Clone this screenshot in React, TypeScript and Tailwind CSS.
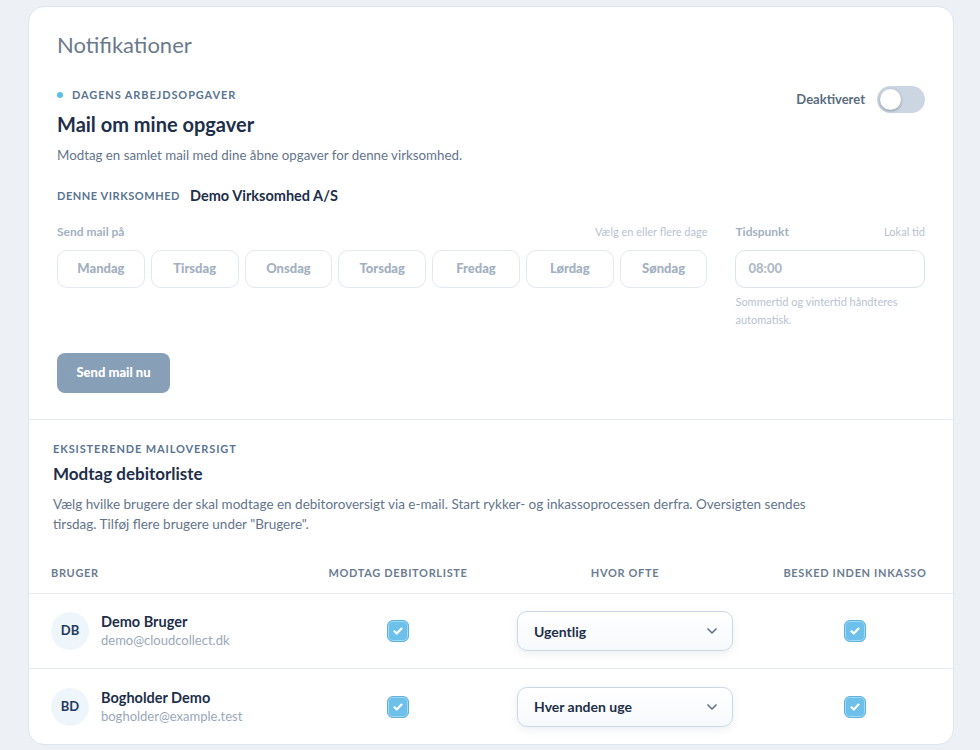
import { ChevronDown } from "lucide-react";

const days = ["Mandag", "Tirsdag", "Onsdag", "Torsdag", "Fredag", "Lørdag", "Søndag"];

const users = [
  { initials: "DB", name: "Demo Bruger", email: "demo@cloudcollect.dk", freq: "Ugentlig" },
  { initials: "BD", name: "Bogholder Demo", email: "bogholder@example.test", freq: "Hver anden uge" },
];

function Check() {
  return (
    <span className="flex h-[22px] w-[22px] items-center justify-center rounded-[6px] border border-[#5db2df] bg-[#6cc0e9] shadow-[inset_0_0_0_1px_#a3d9f3]">
      <svg width="12" height="12" viewBox="0 0 12 12" fill="none">
        <path d="M2.5 6.3l2.3 2.2 4.7-4.9" stroke="#fff" strokeWidth="2.2" strokeLinecap="round" strokeLinejoin="round" />
      </svg>
    </span>
  );
}

export default function App() {
  return (
    <div className="min-h-[750px] bg-[#edf1f5] pl-[28px] pr-[26px] pt-[6px] font-['Lato',sans-serif] text-[#1e2f4a]">
      <div className="overflow-hidden rounded-[16px] border border-[#dde5ee] bg-white">
        <section className="px-7 pb-[26px] pt-[23px]">
          <h1 className="text-[22px] leading-[30px] font-normal text-[#6b7a8b]">Notifikationer</h1>

          <div className="mt-[27px] flex items-start justify-between">
            <div>
              <div className="flex items-center gap-[9px]">
                <span className="h-[6px] w-[6px] rounded-full bg-[#5bbfe9]" />
                <span className="text-[11px] leading-4 font-bold uppercase tracking-[0.08em] text-[#5a7491]">
                  Dagens arbejdsopgaver
                </span>
              </div>
              <h2 className="mt-[7px] text-[20px] leading-7 font-bold text-[#1e2f4a]">Mail om mine opgaver</h2>
              <p className="mt-[7px] text-[13.3px] leading-5 text-[#64748b]">
                Modtag en samlet mail med dine åbne opgaver for denne virksomhed.
              </p>
            </div>
            <div className="-mt-[1px] flex items-center gap-3">
              <span className="text-[13px] font-bold text-[#5a6b80]">Deaktiveret</span>
              <span className="flex h-[27px] w-[48px] items-center rounded-full bg-[#cbd6e2] px-[3px]">
                <span className="h-[21px] w-[21px] rounded-full bg-white shadow-[0_1px_3px_rgba(15,23,42,0.35)]" />
              </span>
            </div>
          </div>

          <div className="mt-[21px] flex items-center gap-[10px] leading-5">
            <span className="text-[11px] font-bold uppercase tracking-[0.05em] text-[#5a7491]">Denne virksomhed</span>
            <span className="text-[14.5px] font-bold text-[#1e2f4a]">Demo Virksomhed A/S</span>
          </div>

          <div className="mt-[17px] flex gap-7">
            <div className="w-[652px]">
              <div className="flex items-center justify-between leading-[18px]">
                <span className="text-[12px] font-bold text-[#a3b0c0]">Send mail på</span>
                <span className="text-[11px] text-[#b8c2cf]">Vælg en eller flere dage</span>
              </div>
              <div className="mt-[9px] grid grid-cols-7 gap-[6px]">
                {days.map((d) => (
                  <button
                    key={d}
                    className="flex h-[38px] items-center justify-center rounded-[10px] border border-[#e2e8f0] bg-white text-[13px] font-black text-[#a3b0c0]"
                  >
                    {d}
                  </button>
                ))}
              </div>
            </div>
            <div className="w-[190px]">
              <div className="flex items-center justify-between leading-[18px]">
                <span className="text-[12px] font-bold text-[#a3b0c0]">Tidspunkt</span>
                <span className="text-[11px] text-[#b8c2cf]">Lokal tid</span>
              </div>
              <div className="mt-[9px] flex h-[38px] items-center rounded-[10px] border border-[#dbe3ec] px-3 text-[13px] font-black text-[#b0bac6]">
                08:00
              </div>
              <p className="mt-[5px] text-[11px] leading-[18px] text-[#b8c2cf]">
                Sommertid og vintertid håndteres automatisk.
              </p>
            </div>
          </div>

          <button className="mt-[24px] h-10 w-[113px] rounded-[8px] bg-[#87a0b8] text-[13px] font-black text-white">
            Send mail nu
          </button>
        </section>

        <section className="border-t border-[#e5ebf1]">
          <div className="px-6 pt-[21px]">
            <div className="text-[11px] leading-4 font-bold uppercase tracking-[0.08em] text-[#5a7491]">
              Eksisterende mailoversigt
            </div>
            <h2 className="mt-[5px] text-[17px] leading-6 font-bold text-[#1e2f4a]">Modtag debitorliste</h2>
            <p className="mt-[8px] max-w-[775px] text-[13.5px] leading-5 text-[#64748b]">
              Vælg hvilke brugere der skal modtage en debitoroversigt via e-mail. Start rykker- og inkassoprocessen derfra. Oversigten sendes tirsdag. Tilføj flere brugere under "Brugere".
            </p>
          </div>

          <div className="mt-5">
            <div className="grid h-10 grid-cols-[272px_150px_304px_156px] items-center border-b border-[#e5ebf1] px-[22px] text-[11px] font-bold uppercase tracking-[0.06em] text-[#6b7c90]">
              <span>Bruger</span>
              <span className="text-center">Modtag debitorliste</span>
              <span className="text-center">Hvor ofte</span>
              <span className="text-center">Besked inden inkasso</span>
            </div>
            {users.map((u, i) => (
              <div
                key={u.email}
                className={`grid h-[75px] grid-cols-[272px_150px_304px_156px] items-center px-[22px] ${i === 0 ? "border-b border-[#e5ebf1]" : ""}`}
              >
                <div className="flex items-center gap-3">
                  <span className="flex h-[38px] w-[38px] items-center justify-center rounded-full bg-[#eef6fc] text-[13px] font-bold text-[#1e3a5f]">
                    {u.initials}
                  </span>
                  <div className="leading-[18px]">
                    <div className="text-[14.5px] font-bold text-[#1e2f4a]">{u.name}</div>
                    <div className="text-[13px] text-[#9aa8b8]">{u.email}</div>
                  </div>
                </div>
                <div className="flex justify-center">
                  <Check />
                </div>
                <div className="flex justify-center">
                  <div className="flex h-10 w-[216px] items-center justify-between rounded-[10px] border border-[#cbd8e6] bg-gradient-to-b from-white to-[#f6f9fc] pl-4 pr-3 shadow-[0_3px_8px_rgba(30,47,74,0.08)]">
                    <span className="text-[14px] font-bold text-[#1e2f4a]">{u.freq}</span>
                    <ChevronDown size={16} strokeWidth={2.5} className="text-[#64748b]" />
                  </div>
                </div>
                <div className="flex justify-center">
                  <Check />
                </div>
              </div>
            ))}
          </div>
        </section>
      </div>
    </div>
  );
}
